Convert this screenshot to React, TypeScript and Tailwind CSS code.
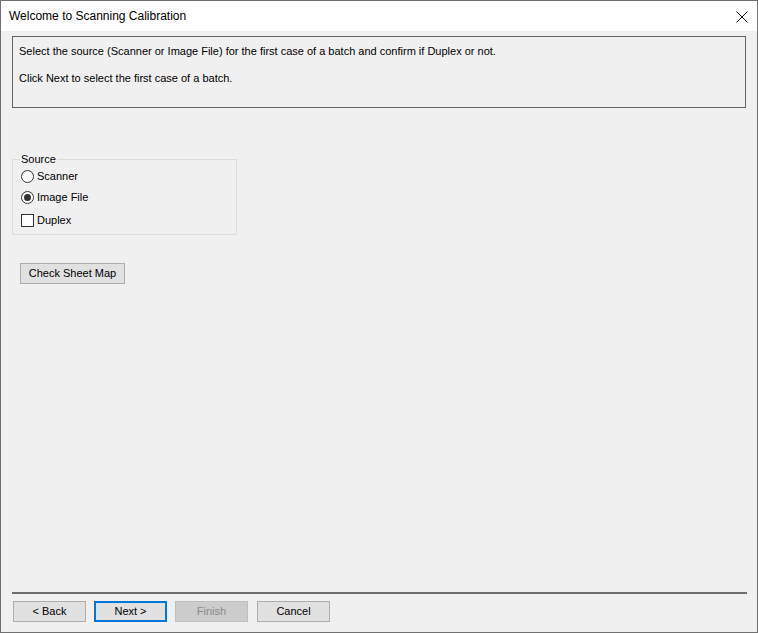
import React from "react";

const titleFont = { fontFamily: '"Segoe UI", "Liberation Sans", Arial, sans-serif' };
const bodyFont = { fontFamily: '"Microsoft Sans Serif", "Liberation Sans", Arial, sans-serif' };

function Radio({ checked, label, height }: { checked?: boolean; label: string; height: string }) {
  return (
    <div className={`flex items-center ${height}`}>
      <div className="flex h-[13px] w-[13px] items-center justify-center rounded-full border border-[#333333] bg-white">
        {checked && <div className="h-[7px] w-[7px] rounded-full bg-[#333333]" />}
      </div>
      <span className="ml-[3px] text-[11px] text-black">{label}</span>
    </div>
  );
}

function WizardButton({
  label,
  focused,
  disabled,
}: {
  label: string;
  focused?: boolean;
  disabled?: boolean;
}) {
  const cls = disabled
    ? "border border-[#bfbfbf] bg-[#cccccc] text-[#8a8a8a]"
    : focused
      ? "border-2 border-[#0078d7] bg-[#e1e1e1] text-black"
      : "border border-[#adadad] bg-[#e1e1e1] text-black";
  return (
    <div className={`flex h-[21px] w-[73px] items-center justify-center text-[11px] ${cls}`}>
      {label}
    </div>
  );
}

export default function App() {
  return (
    <div
      style={bodyFont}
      className="flex h-[633px] w-[758px] flex-col border border-[#6f6f6f] bg-[#f0f0f0] text-[11px] text-black"
    >
      <div style={titleFont} className="flex h-[30px] shrink-0 items-center justify-between bg-white pl-[8px] pr-[9px]">
        <span className="text-[12px]">Welcome to Scanning Calibration</span>
        <svg width="12" height="12" viewBox="0 0 12 12" className="mt-[1px]">
          <path d="M0.5 0.5 L11.5 11.5 M11.5 0.5 L0.5 11.5" stroke="#111" strokeWidth="1" />
        </svg>
      </div>

      <div className="flex flex-1 flex-col px-[11px]">
        <div className="mt-[5px] h-[72px] border border-[#646464] pl-[6px] pt-[6px]">
          <div className="leading-[16px]">
            Select the source (Scanner or Image File) for the first case of a batch and confirm if Duplex or not.
          </div>
          <div className="mt-[11px] leading-[16px]">Click Next to select the first case of a batch.</div>
        </div>

        <fieldset className="mt-[44px] h-[83px] w-[225px] border border-[#dcdcdc] pl-[8px]">
          <legend className="ml-[-1px] px-[1px] text-[11px] leading-[14px]">Source</legend>
          <div className="-mt-[1px]">
            <Radio label="Scanner" height="h-[22px]" />
            <Radio checked label="Image File" height="h-[20px]" />
            <div className="flex h-[26px] items-center">
              <div className="h-[13px] w-[13px] border border-[#333333] bg-white" />
              <span className="ml-[3px]">Duplex</span>
            </div>
          </div>
        </fieldset>

        <div className="ml-[8px] mt-[28px] flex h-[21px] w-[105px] items-center justify-center border border-[#adadad] bg-[#e1e1e1]">
          Check Sheet Map
        </div>

        <div className="mt-auto h-[2px] w-[735px] bg-[#6e6e6e]" />
        <div className="mb-[10px] mt-[7px] flex gap-[8px] pl-[1px]">
          <WizardButton label="< Back" />
          <WizardButton label="Next >" focused />
          <WizardButton label="Finish" disabled />
          <div className="ml-[1px]">
            <WizardButton label="Cancel" />
          </div>
        </div>
      </div>
    </div>
  );
}
